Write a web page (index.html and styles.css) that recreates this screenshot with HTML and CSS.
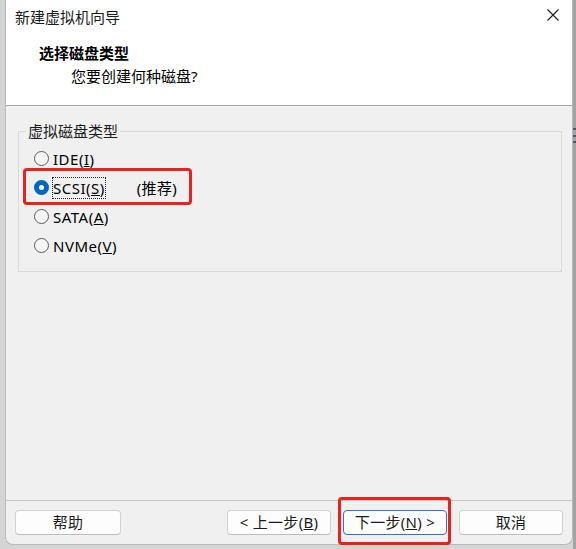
FILE: index.html
```html
<!DOCTYPE html>
<html lang="zh-CN">
<head>
<meta charset="utf-8">
<title>新建虚拟机向导</title>
<link rel="stylesheet" href="styles.css">
</head>
<body>
<div class="window">
  <div class="header">
    <div class="titlebar">
      <span class="title">新建虚拟机向导</span>
      <svg class="close" width="12" height="12" viewBox="0 0 12 12"><path d="M0.5 0.5 L11.5 11.5 M11.5 0.5 L0.5 11.5" stroke="#1b1b1b" stroke-width="1.1" fill="none"/></svg>
    </div>
    <div class="heading">选择磁盘类型</div>
    <div class="subtitle">您要创建何种磁盘?</div>
  </div>
  <div class="content">
    <fieldset class="group">
      <legend class="legend">虚拟磁盘类型</legend>
      <div class="options">
        <div class="option"><span class="radio"></span><span class="label">IDE(<u>I</u>)</span></div>
        <div class="option"><span class="radio checked"></span><span class="label focus">SCSI(<u>S</u>)</span><span class="note">(推荐)</span></div>
        <div class="option"><span class="radio"></span><span class="label">SATA(<u>A</u>)</span></div>
        <div class="option"><span class="radio"></span><span class="label">NVMe(<u>V</u>)</span></div>
      </div>
    </fieldset>
  </div>
  <div class="footer">
    <button class="btn">帮助</button>
    <div class="spacer"></div>
    <button class="btn">&lt; 上一步(<u>B</u>)</button>
    <button class="btn primary">下一步(<u>N</u>) &gt;</button>
    <button class="btn">取消</button>
  </div>
  <div class="mark mark-scsi"></div>
  <div class="mark mark-next"></div>
</div>
<div class="edge"><div class="edge-grip"></div></div>
</body>
</html>
```
FILE: styles.css
```css
* { box-sizing: border-box; }
html, body { margin: 0; padding: 0; }
body {
  width: 576px;
  height: 549px;
  background: #d4d4d4;
  display: flex;
  align-items: flex-start;
  font-family: "Noto Sans", "Noto Sans CJK SC", sans-serif;
  font-size: 15px;
  color: #1b1b1b;
  overflow: hidden;
}
.window {
  position: relative;
  margin-left: 5px;
  width: 568px;
  height: 545px;
  background: #f0f0f0;
  border: 1px solid #b8b8b8;
  border-top: none;
  border-radius: 0 0 8px 8px;
  display: flex;
  flex-direction: column;
}
.edge {
  width: 3px;
  height: 549px;
  background: #a3a3a3;
  padding-top: 128px;
}
.edge-grip {
  height: 15px;
  border-top: 2px solid #505a66;
  border-bottom: 2px solid #505a66;
  background: linear-gradient(#a3a3a3 5px, #505a66 5px, #505a66 7px, #a3a3a3 7px);
}
.header {
  height: 106px;
  background: #ffffff;
  border-bottom: 1px solid #a5a5a5;
}
.titlebar {
  height: 33px;
  display: flex;
  align-items: center;
  justify-content: space-between;
  padding: 0 13px 0 9px;
}
.title { line-height: 20px; }
.close { display: block; margin-top: -3px; }
.heading {
  margin-top: 10px;
  padding-left: 33px;
  line-height: 20px;
  font-weight: 700;
  color: #000;
}
.subtitle {
  margin-top: 3px;
  padding-left: 65px;
  line-height: 20px;
  color: #000;
}
.content {
  flex: 1;
  padding: 0 10px 0 12px;
}
.group {
  margin: 15px 0 0 0;
  padding: 0 0 11px 0;
  border: 1px solid #d9d9d9;
  min-width: 0;
}
.legend {
  margin-left: 7px;
  padding: 0 2px;
  line-height: 20px;
  color: #1b1b1b;
}
.options {
  padding: 3px 0 0 15px;
  display: flex;
  flex-direction: column;
}
.option {
  height: 29px;
  display: flex;
  align-items: center;
}
.radio {
  width: 15px;
  height: 15px;
  border-radius: 50%;
  border: 1px solid #5c5c5c;
  background: #f5f5f5;
  margin-right: 4px;
  flex: none;
}
.radio.checked {
  border: 5px solid #0067c0;
  background: #ffffff;
}
.label {
  line-height: 20px;
  color: #000;
  letter-spacing: 0.5px;
}
.label.focus {
  outline: 1px dotted #222;
  outline-offset: 0;
}
.note {
  margin-left: 32px;
  color: #000;
  letter-spacing: 0.3px;
}
.footer {
  height: 44px;
  border-top: 1px solid #c6c6c6;
  display: flex;
  align-items: flex-start;
  gap: 12px;
  padding: 9px 9px 0 9px;
}
.spacer { flex: 1; }
.btn {
  width: 104px;
  height: 25px;
  margin: 0;
  padding: 0;
  background: #fdfdfd;
  border: 1px solid #d2d2d2;
  border-bottom-color: #bdbdbd;
  border-radius: 4px;
  font-family: "Noto Sans", "Noto Sans CJK SC", sans-serif;
  font-size: 15px;
  color: #1b1b1b;
  line-height: 21px;
  letter-spacing: 0.3px;
}
.btn:first-child { width: 106px; }
.btn.primary { border-color: #2f74c8; }
.mark {
  position: absolute;
  border: 3px solid #e8221d;
  border-radius: 4px;
  pointer-events: none;
}
.mark-scsi { left: 17px; top: 168px; width: 169px; height: 37px; }
.mark-next { left: 332px; top: 497px; width: 113px; height: 48px; }
```
